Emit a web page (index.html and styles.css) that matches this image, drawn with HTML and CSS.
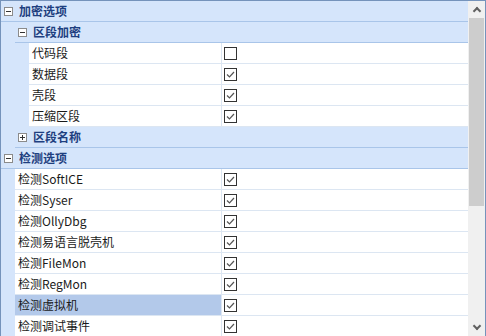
FILE: index.html
```html
<!DOCTYPE html>
<html lang="zh-CN">
<head>
    <meta charset="UTF-8">
    <title>加密选项</title>
    <link rel="stylesheet" href="styles.css">
</head>
<body>
    <div class="grid">
        <div class="list">
            <div class="cat"><span class="toggle minus"></span>加密选项</div>
            <div class="group">
                <div class="cat"><span class="toggle minus"></span>区段加密</div>
                <div class="group">
                    <div class="row"><div class="name">代码段</div><div class="value"><span class="check"></span></div></div>
                    <div class="row"><div class="name">数据段</div><div class="value"><span class="check"><svg viewBox="0 0 11 11"><polyline points="2,5.5 4.5,8 9,3"/></svg></span></div></div>
                    <div class="row"><div class="name">壳段</div><div class="value"><span class="check"><svg viewBox="0 0 11 11"><polyline points="2,5.5 4.5,8 9,3"/></svg></span></div></div>
                    <div class="row"><div class="name">压缩区段</div><div class="value"><span class="check"><svg viewBox="0 0 11 11"><polyline points="2,5.5 4.5,8 9,3"/></svg></span></div></div>
                </div>
                <div class="cat"><span class="toggle plus"></span>区段名称</div>
            </div>
            <div class="cat"><span class="toggle minus"></span>检测选项</div>
            <div class="group">
                <div class="row"><div class="name">检测SoftICE</div><div class="value"><span class="check"><svg viewBox="0 0 11 11"><polyline points="2,5.5 4.5,8 9,3"/></svg></span></div></div>
                <div class="row"><div class="name">检测Syser</div><div class="value"><span class="check"><svg viewBox="0 0 11 11"><polyline points="2,5.5 4.5,8 9,3"/></svg></span></div></div>
                <div class="row"><div class="name">检测OllyDbg</div><div class="value"><span class="check"><svg viewBox="0 0 11 11"><polyline points="2,5.5 4.5,8 9,3"/></svg></span></div></div>
                <div class="row"><div class="name">检测易语言脱壳机</div><div class="value"><span class="check"><svg viewBox="0 0 11 11"><polyline points="2,5.5 4.5,8 9,3"/></svg></span></div></div>
                <div class="row"><div class="name">检测FileMon</div><div class="value"><span class="check"><svg viewBox="0 0 11 11"><polyline points="2,5.5 4.5,8 9,3"/></svg></span></div></div>
                <div class="row"><div class="name">检测RegMon</div><div class="value"><span class="check"><svg viewBox="0 0 11 11"><polyline points="2,5.5 4.5,8 9,3"/></svg></span></div></div>
                <div class="row selected"><div class="name">检测虚拟机</div><div class="value"><span class="check"><svg viewBox="0 0 11 11"><polyline points="2,5.5 4.5,8 9,3"/></svg></span></div></div>
                <div class="row"><div class="name">检测调试事件</div><div class="value"><span class="check"><svg viewBox="0 0 11 11"><polyline points="2,5.5 4.5,8 9,3"/></svg></span></div></div>
            </div>
        </div>
        <div class="scrollbar">
            <div class="arrow up"></div>
            <div class="track"><div class="thumb"></div></div>
            <div class="arrow down"></div>
        </div>
    </div>
</body>
</html>
```

FILE: styles.css
```css
body {
    margin: 0;
    padding: 0;
    background-color: #ffffff;
    font-family: "Noto Sans CJK SC", "Noto Sans", sans-serif;
    font-size: 12px;
}
.grid {
    display: flex;
    width: 486px;
    height: 336px;
    box-sizing: border-box;
    border: 1px solid #7593bb;
    border-bottom: none;
    overflow: hidden;
}
.list {
    flex: 1;
    overflow: hidden;
    background-color: #d5e5fb;
}
.group {
    padding-left: 14px;
    background-color: #d5e5fb;
}
.cat {
    display: flex;
    align-items: center;
    height: 21px;
    box-sizing: border-box;
    border-bottom: 1px solid #a9c5e9;
    background-color: #d5e5fb;
    color: #1e3f80;
    font-weight: bold;
    line-height: 20px;
}
.toggle {
    position: relative;
    width: 9px;
    height: 9px;
    box-sizing: border-box;
    border: 1px solid #8b8b8b;
    background-color: #ffffff;
    margin: 0 6px 0 3px;
}
.toggle::before,
.toggle.plus::after {
    content: "";
    position: absolute;
    background-color: #333333;
}
.toggle::before {
    left: 1px;
    top: 3px;
    width: 5px;
    height: 1px;
}
.toggle.plus::after {
    left: 3px;
    top: 1px;
    width: 1px;
    height: 5px;
}
.row {
    display: flex;
    height: 21px;
    box-sizing: border-box;
    border-bottom: 1px solid #dce6f2;
    background-color: #ffffff;
    line-height: 20px;
}
.name {
    flex: 1;
    padding-left: 3px;
    color: #1a1a1a;
    white-space: nowrap;
}
.value {
    width: 247px;
    box-sizing: border-box;
    border-left: 1px solid #dce6f2;
    display: flex;
    align-items: center;
    padding-left: 2px;
    background-color: #ffffff;
}
.selected .name {
    background-color: #b3c9ea;
}
.check {
    display: block;
    width: 13px;
    height: 13px;
    box-sizing: border-box;
    border: 1px solid #333333;
    background-color: #ffffff;
}
.check svg {
    display: block;
    width: 11px;
    height: 11px;
}
.check polyline {
    fill: none;
    stroke: #555555;
    stroke-width: 1.2;
}
.scrollbar {
    width: 17px;
    display: flex;
    flex-direction: column;
    background-color: #f0f0f0;
}
.arrow {
    height: 17px;
    position: relative;
}
.arrow::after {
    content: "";
    position: absolute;
    left: 6px;
    width: 4px;
    height: 4px;
    border-left: 2px solid #606060;
    border-top: 2px solid #606060;
}
.arrow.up::after {
    top: 7px;
    transform: rotate(45deg);
}
.arrow.down::after {
    top: 4px;
    transform: rotate(225deg);
}
.track {
    flex: 1;
    padding: 0 1px;
}
.thumb {
    height: 188px;
    background-color: #cdcdcd;
}
```
